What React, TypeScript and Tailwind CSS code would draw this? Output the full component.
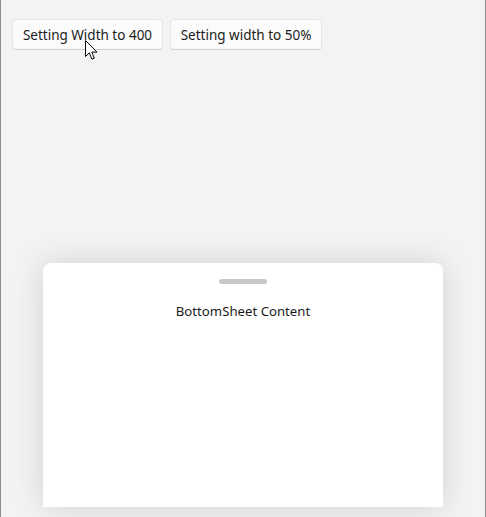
import React from "react";

const font = { fontFamily: '"Noto Sans", "Open Sans", sans-serif' };

function Cursor() {
  return (
    <svg
      className="pointer-events-none absolute left-[84px] top-[40px]"
      width="13"
      height="21"
      viewBox="0 0 13 21"
    >
      <path
        d="M0.5 0.5 L0.5 16.5 L4.3 12.9 L6.9 19.2 L9.3 18.2 L6.8 12.1 L12 12.1 Z"
        fill="#ffffff"
        stroke="#000000"
        strokeWidth="1"
        strokeLinejoin="round"
      />
    </svg>
  );
}

function WinButton({ label, width }: { label: string; width: string }) {
  return (
    <button
      className={`h-[31px] ${width} rounded-[4px] border border-[#e5e5e5] border-b-[#d0d0d0] bg-[#fbfbfb] pt-[2px] text-[13.5px] text-[#1b1b1b] leading-none`}
    >
      {label}
    </button>
  );
}

export default function App() {
  return (
    <div
      style={font}
      className="relative flex h-[517px] w-[486px] flex-col border-x border-[#8c8c8c] bg-[#f3f3f3]"
    >
      <div className="flex gap-[7px] pl-[11px] pt-[19px]">
        <WinButton label="Setting Width to 400" width="w-[151px]" />
        <WinButton label="Setting width to 50%" width="w-[152px]" />
      </div>

      <div className="flex-1" />

      <div className="mx-auto mb-[10px] flex h-[244px] w-[400px] flex-col items-center rounded-t-[8px] bg-white pt-[16px] shadow-[0_0_32px_rgba(0,0,0,0.14)]">
        <div className="h-[5px] w-[48px] rounded-full bg-[#c8c8c8]" />
        <p className="mt-[21px] text-[13.2px] leading-none text-[#1b1b1b]">
          BottomSheet Content
        </p>
      </div>

      <Cursor />
    </div>
  );
}
